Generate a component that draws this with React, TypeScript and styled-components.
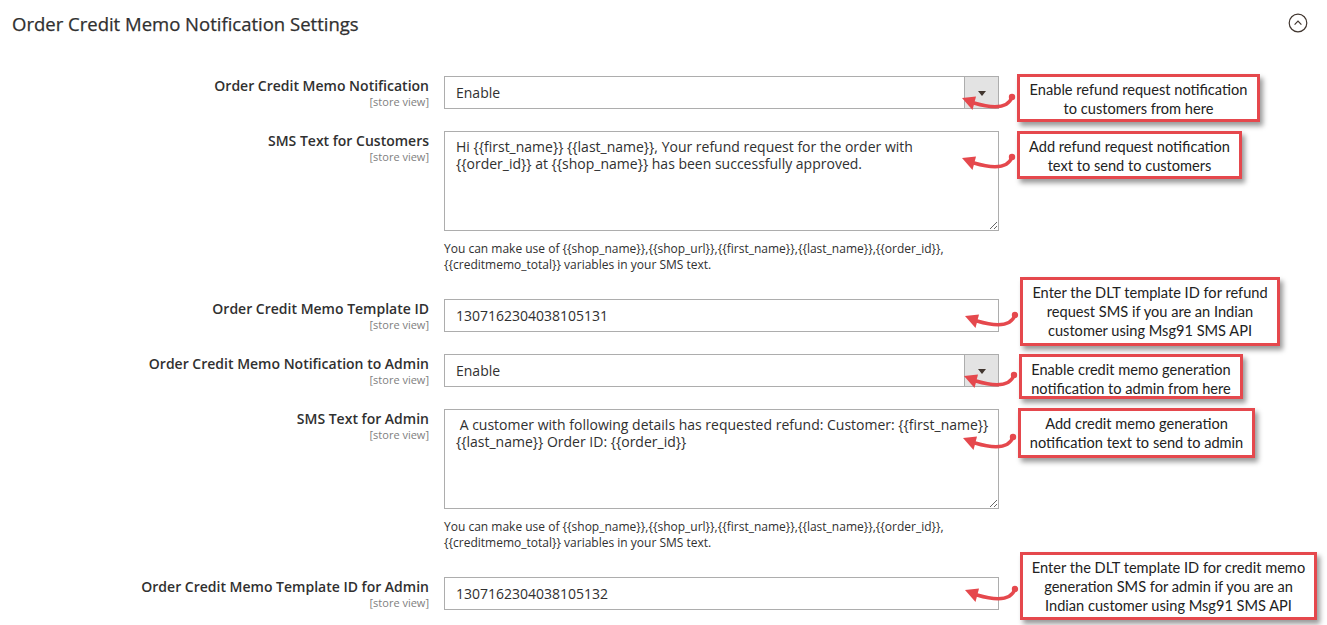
import styled, { createGlobalStyle } from 'styled-components';

const GlobalStyle = createGlobalStyle`
  body {
    margin: 0;
    background: #fff;
    font-family: 'Open Sans', 'Noto Sans', sans-serif;
    color: #303030;
  }
`;

interface Callout {
  lines: string[];
  x: number;
  y: number;
  width: number;
  height: number;
  dotY: number;
}

interface Field {
  label: string;
  kind: 'select' | 'textarea' | 'input';
  value: string;
  note?: boolean;
  callout: Callout;
}

const fields: Field[] = [
  {
    label: 'Order Credit Memo Notification',
    kind: 'select',
    value: 'Enable',
    callout: { lines: ['Enable refund request notification', 'to customers from here'], x: 3, y: -2, width: 243, height: 48, dotY: 23 },
  },
  {
    label: 'SMS Text for Customers',
    kind: 'textarea',
    value: 'Hi {{first_name}} {{last_name}}, Your refund request for the order with {{order_id}} at {{shop_name}} has been successfully approved.',
    note: true,
    callout: { lines: ['Add refund request notification', 'text to send to customers'], x: 3, y: 0, width: 225, height: 48, dotY: 26 },
  },
  {
    label: 'Order Credit Memo Template ID',
    kind: 'input',
    value: '1307162304038105131',
    callout: { lines: ['Enter the DLT template ID for refund', 'request SMS if you are an Indian', 'customer using Msg91 SMS API'], x: 6, y: -22, width: 260, height: 69, dotY: 38 },
  },
  {
    label: 'Order Credit Memo Notification to Admin',
    kind: 'select',
    value: 'Enable',
    callout: { lines: ['Enable credit memo generation', 'notification to admin from here'], x: 5, y: 0, width: 224, height: 45, dotY: 21 },
  },
  {
    label: 'SMS Text for Admin',
    kind: 'textarea',
    value: ' A customer with following details has requested refund: Customer: {{first_name}} {{last_name}} Order ID: {{order_id}}',
    note: true,
    callout: { lines: ['Add credit memo generation', 'notification text to send to admin'], x: 4, y: -1, width: 237, height: 50, dotY: 29 },
  },
  {
    label: 'Order Credit Memo Template ID for Admin',
    kind: 'input',
    value: '1307162304038105132',
    callout: { lines: ['Enter the DLT template ID for credit memo', 'generation SMS for admin if you are an', 'Indian customer using Msg91 SMS API'], x: 6, y: -25, width: 297, height: 68, dotY: 37 },
  },
];

export default function App() {
  return (
    <>
      <GlobalStyle />
      <Page>
        <Header>
          <Title>Order Credit Memo Notification Settings</Title>
          <svg width="20" height="20" viewBox="0 0 20 20">
            <circle cx="10" cy="10" r="8.8" fill="none" stroke="#41362f" strokeWidth="1.2" />
            <polyline points="6.6,11.6 10,8.2 13.4,11.6" fill="none" stroke="#41362f" strokeWidth="1.2" />
          </svg>
        </Header>
        <Fieldset>
          {fields.map((f) => (
            <Row key={f.label}>
              <LabelCell>
                <Label>{f.label}</Label>
                <Scope>[store view]</Scope>
              </LabelCell>
              <ControlCell>
                {f.kind === 'select' && (
                  <Select>
                    <SelectValue>{f.value}</SelectValue>
                    <SelectButton>
                      <Caret />
                    </SelectButton>
                  </Select>
                )}
                {f.kind === 'input' && <TextInput readOnly value={f.value} />}
                {f.kind === 'textarea' && <TextArea readOnly value={f.value} />}
                {f.note && (
                  <Note>
                    You can make use of {'{{shop_name}},{{shop_url}},{{first_name}},{{last_name}},{{order_id}},'}{' '}
                    {'{{creditmemo_total}}'} variables in your SMS text.
                  </Note>
                )}
              </ControlCell>
              <CalloutCell>
                <CalloutBox $x={f.callout.x} $y={f.callout.y} $w={f.callout.width} $h={f.callout.height}>
                  <Arrow $top={f.callout.dotY - 8} width="56" height="24" viewBox="0 0 56 24">
                    <path d="M51 8 C47 20 30 19 13 14" fill="none" stroke="#e5484d" strokeWidth="3.5" strokeLinecap="round" />
                    <circle cx="51" cy="8" r="3.2" fill="#e5484d" />
                    <polygon points="1,9 15,7.5 11.5,21" fill="#e5484d" />
                  </Arrow>
                  {f.callout.lines.map((l) => (
                    <div key={l}>{l}</div>
                  ))}
                </CalloutBox>
              </CalloutCell>
            </Row>
          ))}
        </Fieldset>
      </Page>
    </>
  );
}

const Page = styled.div`
  width: 1327px;
  height: 625px;
  overflow: hidden;
`;

const Header = styled.div`
  height: 48px;
  display: flex;
  align-items: center;
  justify-content: space-between;
  padding: 0 19px 2px 12px;
  box-sizing: border-box;
`;

const Title = styled.h2`
  margin: 0;
  font-size: 18.5px;
  font-weight: 400;
  color: #303030;
  -webkit-text-stroke: 0.25px #303030;
`;

const Fieldset = styled.div`
  padding: 28px 0 0 12px;
`;

const Row = styled.div`
  display: grid;
  grid-template-columns: 417px 555px 1fr;
  column-gap: 15px;
  align-items: start;
  margin-bottom: 22px;
`;

const LabelCell = styled.div`
  text-align: right;
  padding-top: 1px;
`;

const Label = styled.div`
  font-size: 14px;
  font-weight: 600;
  line-height: 18px;
  color: #303030;
`;

const Scope = styled.div`
  font-size: 11px;
  line-height: 13px;
  color: #808080;
`;

const ControlCell = styled.div`
  display: flex;
  flex-direction: column;
`;

const Select = styled.div`
  height: 33px;
  box-sizing: border-box;
  border: 1px solid #adadad;
  display: flex;
  align-items: center;
  background: #fff;
`;

const SelectValue = styled.div`
  flex: 1;
  padding-left: 11px;
  font-size: 14px;
`;

const SelectButton = styled.div`
  width: 33px;
  align-self: stretch;
  background: #e3e3e3;
  border-left: 1px solid #adadad;
  display: flex;
  align-items: center;
  justify-content: center;
`;

const Caret = styled.span`
  width: 0;
  height: 0;
  border-left: 4.5px solid transparent;
  border-right: 4.5px solid transparent;
  border-top: 5px solid #41362f;
  margin-top: 1px;
`;

const TextInput = styled.input`
  height: 33px;
  box-sizing: border-box;
  border: 1px solid #adadad;
  padding: 0 11px;
  font-family: 'Open Sans', 'Noto Sans', sans-serif;
  font-size: 14px;
  color: #303030;
  outline: none;
`;

const TextArea = styled.textarea`
  height: 100px;
  box-sizing: border-box;
  border: 1px solid #adadad;
  padding: 6px 8px 6px 11px;
  font-family: 'Open Sans', 'Noto Sans', sans-serif;
  font-size: 14px;
  line-height: 17px;
  color: #303030;
  resize: vertical;
  outline: none;
`;

const Note = styled.div`
  margin-top: 10px;
  padding-bottom: 4px;
  font-size: 12px;
  line-height: 16px;
  color: #303030;
`;

const CalloutCell = styled.div`
  position: relative;
  align-self: stretch;
`;

const CalloutBox = styled.div<{ $x: number; $y: number; $w: number; $h: number }>`
  position: absolute;
  left: ${(p) => p.$x}px;
  top: ${(p) => p.$y}px;
  width: ${(p) => p.$w}px;
  height: ${(p) => p.$h}px;
  box-sizing: border-box;
  border: 3px solid #e5484d;
  background: #fff;
  box-shadow: 3px 4px 5px rgba(0, 0, 0, 0.4);
  padding: 3px 4px 0;
  text-align: center;
  font-family: Lato, 'Noto Sans', sans-serif;
  font-size: 14.6px;
  line-height: 19px;
  color: #222;
`;

const Arrow = styled.svg<{ $top: number }>`
  position: absolute;
  left: -59px;
  top: ${(p) => p.$top - 3}px;
  overflow: visible;
`;
